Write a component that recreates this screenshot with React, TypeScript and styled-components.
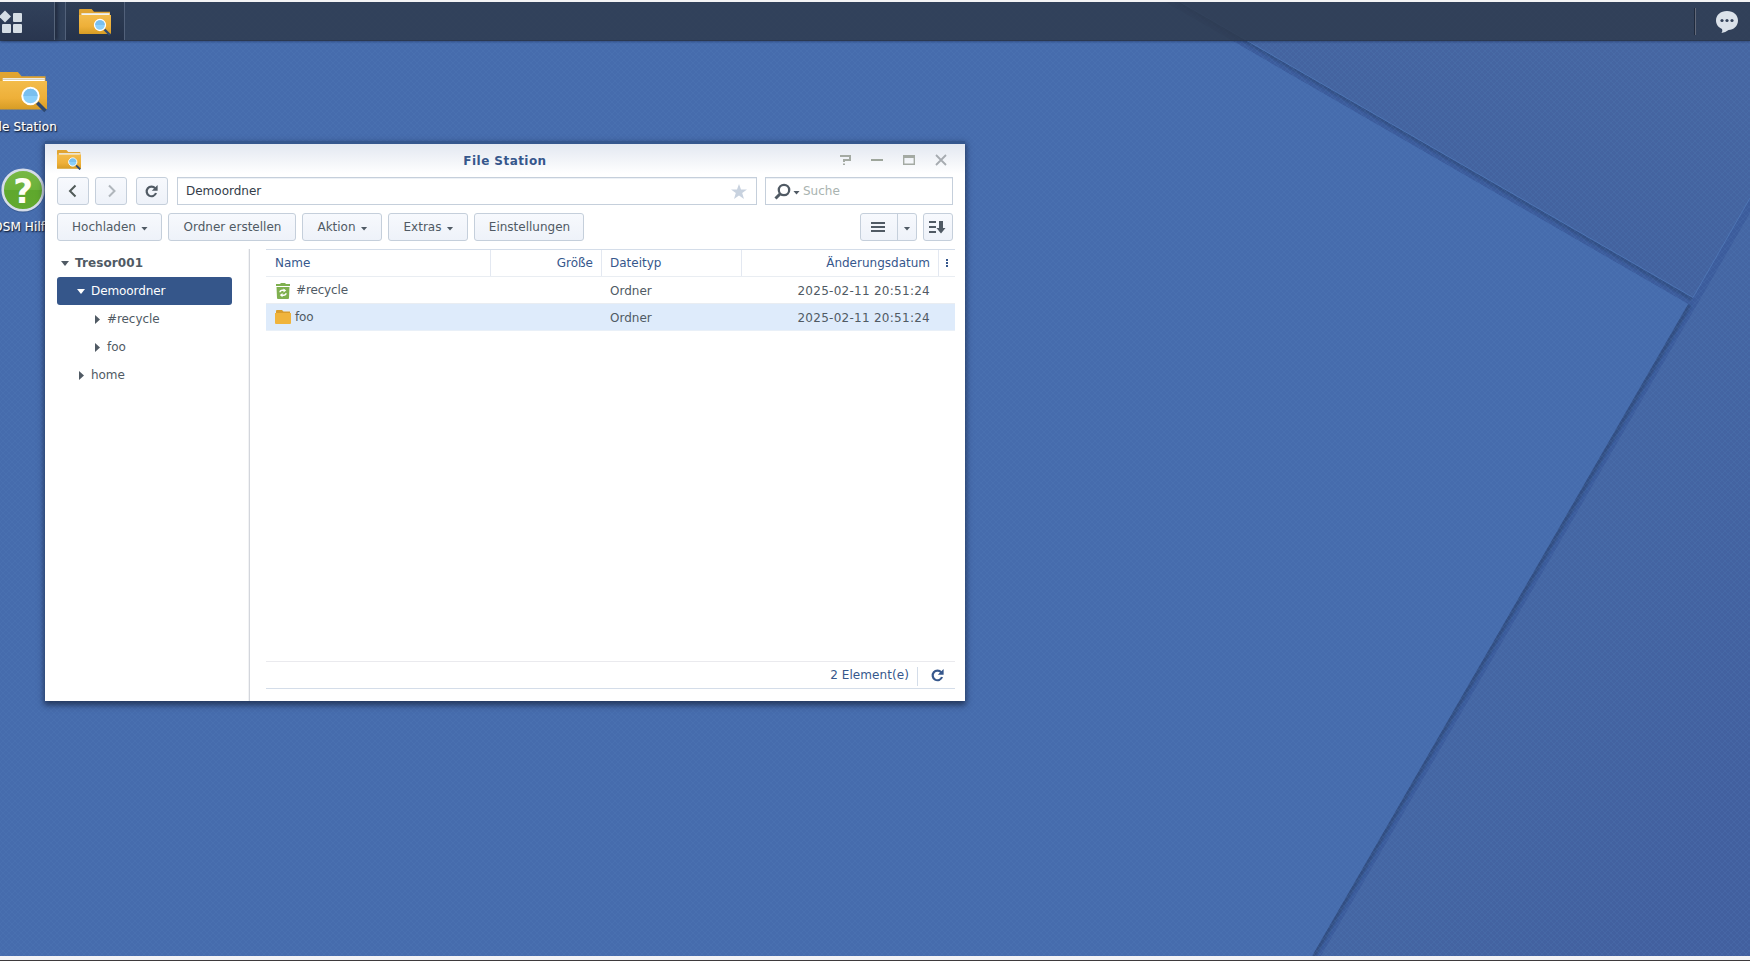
import React from 'react';
import styled, { createGlobalStyle, css } from 'styled-components';

const GlobalStyle = createGlobalStyle`
  *, *::before, *::after { box-sizing: border-box; }
  html, body, #root { height: 100%; }
  body {
    margin: 0;
    overflow: hidden;
    background: #f1f1f3;
    font: 12px/16px "DejaVu Sans", Verdana, sans-serif;
    color: #505a64;
  }
`;

const Page = styled.div`
  display: flex;
  flex-direction: column;
  height: 961px;
  padding: 2px 0 4px;
  background: #f3f3f5;
  border-bottom: 1px solid #3e3a3c;
`;

const Desktop = styled.main`
  position: relative;
  flex: 1;
  display: flex;
  flex-direction: column;
  overflow: hidden;
  background: #466cad;
`;

const Wallpaper = styled.svg`
  position: absolute;
  inset: 0;
`;

const Taskbar = styled.header`
  position: relative;
  display: flex;
  align-items: stretch;
  height: 39px;
  flex: none;
  background: rgba(46, 58, 76, 0.85);
  border-bottom: 1px solid #2a3850;
  box-shadow: 0 1px 2px rgba(20, 35, 70, 0.4);
`;

const MenuButton = styled.div`
  display: flex;
  width: 55px;
  margin-right: 10px;
  padding-top: 8px;
  background: linear-gradient(rgba(35, 45, 70, 0), rgba(35, 45, 70, 0.55));
  border-right: 1px solid #56647a;
  box-shadow: 3px 0 3px rgba(25, 32, 48, 0.6);
`;

const TaskButton = styled.div`
  display: flex;
  width: 60px;
  padding: 7px 0 0 13px;
  background: linear-gradient(#2f3e55, #25324a);
  border: solid #52617a;
  border-width: 0 1px;
`;

const Tray = styled.div`
  display: flex;
  align-items: center;
  margin-left: auto;
  width: 56px;
  &::before {
    content: "";
    width: 2px;
    height: 27px;
    margin-right: 20px;
    border-left: 1px solid #1f2a3d;
    border-right: 1px solid #626878;
  }
`;

const Shortcuts = styled.nav`
  position: absolute;
  left: -37px;
  top: 70px;
  width: 120px;
`;

const Shortcut = styled.div`
  display: flex;
  flex-direction: column;
  align-items: center;
  height: 95px;
`;

const ShortcutLabel = styled.span<{ $gap: number }>`
  margin-top: ${p => p.$gap}px;
  color: #fff;
  letter-spacing: 0.12px;
  white-space: nowrap;
  text-shadow: 0 1px 2px #14233f, 1px 1px 1px #14233f, 0 0 1px #fff;
`;

const Window = styled.section`
  position: absolute;
  left: 45px;
  top: 139px;
  width: 920px;
  height: 560px;
  display: flex;
  flex-direction: column;
  background: #fff;
  border-top: 3px solid #35578e;
  box-shadow: 0 3px 6px 1px rgba(20, 33, 60, 0.7);
`;

const TitleBar = styled.div`
  display: flex;
  height: 33px;
  flex: none;
  padding: 6px 18px 0 12px;
  background: linear-gradient(#e3e8f1, #fff 30px);
`;

const Title = styled.h1`
  flex: 1;
  margin: 3px 0 0 90px;
  text-align: center;
  font-size: 12px;
  line-height: 16px;
  letter-spacing: 0.45px;
  color: #36578c;
`;

const WindowTools = styled.div`
  display: flex;
  gap: 20px;
  margin-top: 4px;
`;

const Bar = styled.div`
  display: flex;
  flex: none;
  height: 28px;
  padding: 0 12px;
  margin-bottom: 8px;
`;

const Button = styled.button<{ $w: number; $mr?: number }>`
  display: flex;
  align-items: center;
  justify-content: center;
  flex: none;
  width: ${p => p.$w}px;
  margin: 0 ${p => p.$mr ?? 6}px 0 0;
  padding: 0 0 0 1px;
  font: inherit;
  letter-spacing: 0;
  color: #505a64;
  background: linear-gradient(#f7f9fd, #eef2f9);
  border: 1px solid #c5cfdb;
  border-radius: 3px;
`;

const IconButton = styled(Button)`
  padding: 0 1px 0 0;
`;

const SplitButton = styled(Button)`
  align-items: stretch;
  padding: 0;
`;

const SplitPart = styled.span<{ $w: number; $line?: boolean }>`
  display: flex;
  align-items: center;
  justify-content: center;
  width: ${p => p.$w}px;
  ${p => p.$line ? css`border-left: 1px solid #c5cfdb;` : css`padding-right: 2px;`}
`;

const Caret = styled.i<{ $ml?: number }>`
  width: 7px;
  height: 4px;
  margin: 3px 0 0 ${p => p.$ml ?? 5}px;
  background: #505a64;
  clip-path: polygon(0 0, 100% 0, 50% 100%);
`;

const Field = styled.div<{ $w: number }>`
  display: flex;
  align-items: center;
  width: ${p => p.$w}px;
  padding: 0 9px 0 8px;
  color: #333c48;
  letter-spacing: 0;
  background: #fff;
  border: 1px solid #c5cfdb;
  box-shadow: inset 0 1px 0 #edf1f6;
`;

const Placeholder = styled.span`
  margin-left: 3px;
  color: #a9b3b0;
`;

const Spacer = styled.div`
  flex: 1;
`;

const Content = styled.div`
  display: flex;
  flex: 1;
`;

const Tree = styled.nav`
  width: 205px;
  padding: 0 18px 0 12px;
  border-right: 1px solid #d3d6dc;
  box-shadow: inset -1px 0 0 #f2f3f5;
`;

const TreeRow = styled.div<{ $depth: number; $selected?: boolean; $root?: boolean }>`
  display: flex;
  align-items: center;
  gap: 6px;
  height: 28px;
  width: 175px;
  padding: 0 0 1px ${p => 4 + p.$depth * 16}px;
  border-radius: 3px;
  letter-spacing: -0.08px;
  ${p => p.$root && css`font-weight: bold; letter-spacing: 0.1px;`}
  ${p => p.$selected && css`background: #35568a; color: #fff;`}
`;

const Arrow = styled.i<{ $open?: boolean }>`
  flex: none;
  width: ${p => (p.$open ? 8 : 5)}px;
  height: ${p => (p.$open ? 5 : 9)}px;
  margin: ${p => (p.$open ? '2px 0 0' : '2px 1px 0 2px')};
  background: currentColor;
  clip-path: ${p => (p.$open ? 'polygon(0 0, 100% 0, 50% 100%)' : 'polygon(0 0, 100% 50%, 0 100%)')};
`;

const Listing = styled.div`
  display: flex;
  flex-direction: column;
  width: 689px;
  margin-left: 16px;
  border-top: 1px solid #d4dde9;
`;

const Columns = styled.div`
  display: grid;
  grid-template-columns: 225px 111px 140px 197px 16px;
  flex: none;
  height: 27px;
  border-bottom: 1px solid #e9edf2;
`;

const HeadCell = styled.div<{ $right?: boolean; $last?: boolean }>`
  padding: ${p => (p.$last ? '9px 0 0 7px' : '5px 8px 0 8px')};
  text-align: ${p => (p.$right ? 'right' : 'left')};
  letter-spacing: 0;
  color: #36578c;
  ${p => !p.$last && css`border-right: 1px solid #e3e8f1;`}
  &:first-child { padding-left: 9px; }
`;

const Row = styled(Columns)<{ $selected?: boolean }>`
  background: ${p => (p.$selected ? '#deebfb' : '#fff')};
  border-bottom-color: ${p => (p.$selected ? '#e9f0f8' : '#e9edf2')};
`;

const Cell = styled.div<{ $right?: boolean }>`
  padding: 6px 9px 0 8px;
  text-align: ${p => (p.$right ? 'right' : 'left')};
  letter-spacing: ${p => (p.$right ? 0.27 : 0)}px;
`;

const NameCell = styled.div`
  display: flex;
  align-items: center;
  padding-left: 9px;
  letter-spacing: -0.15px;
`;

const Status = styled.footer`
  display: flex;
  align-items: center;
  justify-content: flex-end;
  height: 28px;
  margin: auto 0 12px;
  border: solid #d4dde9;
  border-width: 1px 0;
  border-top-color: #eaeaee;
  color: #36578c;
  letter-spacing: 0.08px;
`;

const Divider = styled.i`
  width: 1px;
  height: 19px;
  margin: 2px 13px 0 8px;
  background: #d4dde9;
`;

const StatusEnd = styled.span`
  width: 11px;
`;

const FolderSearch = ({ size, id }: { size: number; id: string }) => (
  <svg width={size} height={(size * 27) / 32} viewBox="0 0 32 27" style={{ display: 'block' }}>
    <defs>
      <linearGradient id={id} x1="0" y1="0" x2="0" y2="1">
        <stop offset="0" stopColor="#f3bc4b" />
        <stop offset="0.6" stopColor="#eeb039" />
        <stop offset="1" stopColor="#d69c25" />
      </linearGradient>
    </defs>
    <path d="M0 1Q0 0 1 0H12.6L15 2.800H31V8H0Z" fill="#e0a431" />
    <path d="M2.500 4H30.500V8H2.500Z" fill="#fff" />
    <path d="M2.500 4.800H30.500" stroke="#c5b893" strokeWidth="0.6" />
    <path d="M0 6H32V24.2Q32 25 31.2 25H0.8Q0 25 0 24.2Z" fill={`url(#${id})`} />
    <path d="M25.5 20.5 31 26" stroke="#2d4870" strokeWidth="2.4" />
    <circle cx="21" cy="16" r="5.5" fill="#8cd0fa" stroke="#fff" strokeWidth="1.3" />
    <path d="M16.2 16A4.8 4.8 0 0 1 25.8 16Z" fill="#79bfee" />
  </svg>
);

const HelpIcon = () => (
  <svg width="46" height="46" viewBox="0 0 46 46">
    <defs>
      <linearGradient id="help" x1="0" y1="0" x2="0" y2="1">
        <stop offset="0" stopColor="#78b845" />
        <stop offset="0.5" stopColor="#6cb23a" />
        <stop offset="0.51" stopColor="#5fa82d" />
        <stop offset="1" stopColor="#62a92e" />
      </linearGradient>
    </defs>
    <circle cx="23" cy="24" r="21.6" fill="#284778" opacity="0.5" />
    <circle cx="23" cy="23" r="20.3" fill="url(#help)" stroke="#d6ddea" strokeWidth="2.600" />
    <text x="23" y="36" textAnchor="middle" fontSize="34" fontWeight="bold" fontFamily="DejaVu Sans" fill="#fffef5">?</text>
  </svg>
);

const MenuIcon = () => (
  <svg width="24" height="24" fill="#d5dde5">
    <path d="M5 0.5 11 6.5 5 12.5 -1 6.5Z" />
    <rect x="13" y="3" width="9" height="9" rx="1" />
    <rect x="2" y="14" width="9" height="9" rx="1" />
    <rect x="13" y="14" width="9" height="9" rx="1" />
  </svg>
);

const ChatIcon = () => (
  <svg width="22" height="23" style={{ marginTop: 2 }}>
    <path d="M11 0C17.5 0 22 4 22 9.5S17.5 19 12.5 19Q9.5 21.5 5.5 22 7 20 6 18C2.500 16.500 0 13.500 0 9.500 0 4 4.500 0 11 0Z" fill="#dbe2ea" />
    <g fill="#35435a"><circle cx="6" cy="9.500" r="1.600" /><circle cx="11" cy="9.500" r="1.600" /><circle cx="16" cy="9.500" r="1.600" /></g>
  </svg>
);

const ReloadIcon = ({ color }: { color: string }) => (
  <svg width="13" height="13" viewBox="0 0 13 13">
    <path d="M10.200 3.400A4.800 4.800 0 1 0 11 8" fill="none" stroke={color} strokeWidth="2.200" />
    <path d="M12.600 0V5.800H6.800Z" fill={color} />
  </svg>
);

const Chevron = ({ dir, color }: { dir: 'left' | 'right'; color: string }) => (
  <svg width="9" height="14" fill="none" stroke={color} strokeWidth="2">
    <path d={dir === 'left' ? 'M7.500 1.500 2 7 7.500 12.500' : 'M2 1.500 7.500 7 2 12.500'} />
  </svg>
);

const RecycleIcon = () => (
  <svg width="16" height="16" style={{ marginTop: 1 }}>
    <path d="M1 1H5.500V0H10.500V1H15V3H1ZM1.500 4H14.500L14 15Q14 16 13 16H3Q2 16 2 15Z" fill="#7fb04f" />
    <path d="M5 9.300Q5.200 7.300 7.600 7.300H9M11 10.200Q10.800 12.200 8.400 12.200H7" fill="none" stroke="#fff" strokeWidth="1.500" />
    <path d="M8.500 5.400 11.200 7.500 8.500 9.600ZM7.500 10 4.800 12.100 7.500 14.200Z" fill="#fff" />
  </svg>
);

const FolderIcon = () => (
  <svg width="16" height="14">
    <path d="M1 1Q1 0 2 0H7L8.500 1.500H15V3H1Z" fill="#d99d2d" />
    <path d="M0 3H16V13Q16 14 15 14H1Q0 14 0 13Z" fill="#f0b43c" />
  </svg>
);

const files = [
  { name: '#recycle', icon: <RecycleIcon />, gap: 5 },
  { name: 'foo', icon: <FolderIcon />, gap: 4, selected: true },
];

const tree = [
  { name: 'Tresor001', depth: 0, open: true, root: true },
  { name: 'Demoordner', depth: 1, open: true, selected: true },
  { name: '#recycle', depth: 2 },
  { name: 'foo', depth: 2 },
  { name: 'home', depth: 1 },
];

const Backdrop = () => (
  <Wallpaper width="1750" height="954" viewBox="0 2 1750 954">
    <defs>
      <pattern id="weave" width="6" height="6" patternUnits="userSpaceOnUse">
        <path d="M0 0 3 3 6 0M0 6 3 3 6 6" fill="none" stroke="#5583bd" strokeWidth="0.7" opacity="0.25" />
      </pattern>
      <linearGradient id="upper" x1="1400" y1="300" x2="1500" y2="0" gradientUnits="userSpaceOnUse">
        <stop offset="0" stopColor="#41609d" />
        <stop offset="1" stopColor="#4666a2" />
      </linearGradient>
      <linearGradient id="right" x1="1480" y1="600" x2="1750" y2="760" gradientUnits="userSpaceOnUse">
        <stop offset="0" stopColor="#4567a4" />
        <stop offset="1" stopColor="#42609f" />
      </linearGradient>
      <filter id="soft" x="-5%" y="-5%" width="110%" height="110%"><feGaussianBlur stdDeviation="0.8" /></filter>
    </defs>
    <path d="M1165 2 1688 304 1312 956H1750V2Z" fill="#3c5c9c" />
    <path d="M1750 213 1321 956H1750Z" fill="url(#right)" />
    <path d="M1178 2 1692 299" fill="none" stroke="#334f84" strokeWidth="4" filter="url(#soft)" />
    <path d="M1689.500 305 1313.500 956" fill="none" stroke="#304d80" strokeWidth="4" filter="url(#soft)" />
    <path d="M1180 2 1693 297.500 1750 198V2Z" fill="url(#upper)" />
    <path d="M1180 2 1693 297.500 1750 198" fill="none" stroke="#4d73b2" strokeWidth="1" />
    <path d="M0 2H1165L1688 304 1312 956H0Z" fill="#466cad" />
    <rect y="2" width="1750" height="954" fill="url(#weave)" />
  </Wallpaper>
);

export default function App() {
  return (
    <Page>
      <GlobalStyle />
      <Desktop>
        <Backdrop />
        <Taskbar>
          <MenuButton><MenuIcon /></MenuButton>
          <TaskButton><FolderSearch size={32} id="fs-task" /></TaskButton>
          <Tray><ChatIcon /></Tray>
        </Taskbar>
        <Shortcuts>
          <Shortcut>
            <FolderSearch size={48} id="fs-desk" />
            <ShortcutLabel $gap={6}>File Station</ShortcutLabel>
          </Shortcut>
          <Shortcut>
            <HelpIcon />
            <ShortcutLabel $gap={6}>DSM Hilfe</ShortcutLabel>
          </Shortcut>
        </Shortcuts>
        <Window>
          <TitleBar>
            <FolderSearch size={24} id="fs-win" />
            <Title>File Station</Title>
            <WindowTools>
              <svg width="12" height="12" fill="none" stroke="#a4aaa3" strokeWidth="2">
                <path d="M1 2H11V6H5V8M5 9.500V11" />
              </svg>
              <svg width="12" height="12"><path d="M0 5H12V7H0Z" fill="#9da59b" /></svg>
              <svg width="12" height="12" fill="none" stroke="#a4aaa3">
                <path d="M0 2.500H12" strokeWidth="3" /><path d="M0.700 2V10.300H11.300V2" strokeWidth="1.400" />
              </svg>
              <svg width="12" height="12" stroke="#a6abb0" strokeWidth="1.800"><path d="M1 1 11 11M11 1 1 11" /></svg>
            </WindowTools>
          </TitleBar>
          <Bar>
            <IconButton $w={32}><Chevron dir="left" color="#505a58" /></IconButton>
            <Button $w={32} $mr={9}><Chevron dir="right" color="#b0b6bc" /></Button>
            <IconButton $w={32} $mr={9}><ReloadIcon color="#505a64" /></IconButton>
            <Field $w={580}>
              Demoordner
              <Spacer />
              <svg width="16" height="15"><path d="M8 0 10 5.500H16L11.200 9 13 15 8 11.400 3 15 4.800 9 0 5.500H6Z" fill="#c8d2df" /></svg>
            </Field>
            <Spacer />
            <Field $w={188}>
              <svg width="17" height="17">
                <circle cx="10" cy="7" r="5.200" fill="none" stroke="#505a64" strokeWidth="2.300" />
                <path d="M6 11 1.500 15.500" stroke="#505a64" strokeWidth="3" />
              </svg>
              <Caret $ml={2} />
              <Placeholder>Suche</Placeholder>
            </Field>
          </Bar>
          <Bar>
            <Button $w={105}>Hochladen<Caret /></Button>
            <Button $w={128}>Ordner erstellen</Button>
            <Button $w={80}>Aktion<Caret /></Button>
            <Button $w={80}>Extras<Caret /></Button>
            <Button $w={110}>Einstellungen</Button>
            <Spacer />
            <SplitButton $w={57}>
              <SplitPart $w={36}>
                <svg width="14" height="10"><path d="M0 1H14M0 5H14M0 9H14" stroke="#505a64" strokeWidth="2" /></svg>
              </SplitPart>
              <SplitPart $w={19} $line><Caret $ml={0} /></SplitPart>
            </SplitButton>
            <IconButton $w={30} $mr={0}>
              <svg width="17" height="13" fill="#505a64">
                <path d="M0 0H7V2H0ZM0 5H7V7H0ZM0 10H7V12H0ZM10 0H14V7H16.500L12 12.500 7.500 7H10Z" />
              </svg>
            </IconButton>
          </Bar>
          <Content>
            <Tree>
              {tree.map((n, i) => (
                <TreeRow key={i} $depth={n.depth} $selected={n.selected} $root={n.root}>
                  <Arrow $open={n.open} />
                  <span>{n.name}</span>
                </TreeRow>
              ))}
            </Tree>
            <Listing>
              <Columns>
                <HeadCell>Name</HeadCell>
                <HeadCell $right>Größe</HeadCell>
                <HeadCell>Dateityp</HeadCell>
                <HeadCell $right>Änderungsdatum</HeadCell>
                <HeadCell $last>
                  <svg width="2" height="8" style={{ display: 'block' }}><path d="M0 0H2V2H0ZM0 3H2V5H0ZM0 6H2V8H0Z" fill="#36578c" /></svg>
                </HeadCell>
              </Columns>
              {files.map(f => (
                <Row key={f.name} $selected={f.selected}>
                  <NameCell>{f.icon}<span style={{ marginLeft: f.gap }}>{f.name}</span></NameCell>
                  <Cell />
                  <Cell>Ordner</Cell>
                  <Cell $right>2025-02-11 20:51:24</Cell>
                </Row>
              ))}
              <Status>
                2 Element(e)
                <Divider />
                <ReloadIcon color="#36578c" />
                <StatusEnd />
              </Status>
            </Listing>
          </Content>
        </Window>
      </Desktop>
    </Page>
  );
}
